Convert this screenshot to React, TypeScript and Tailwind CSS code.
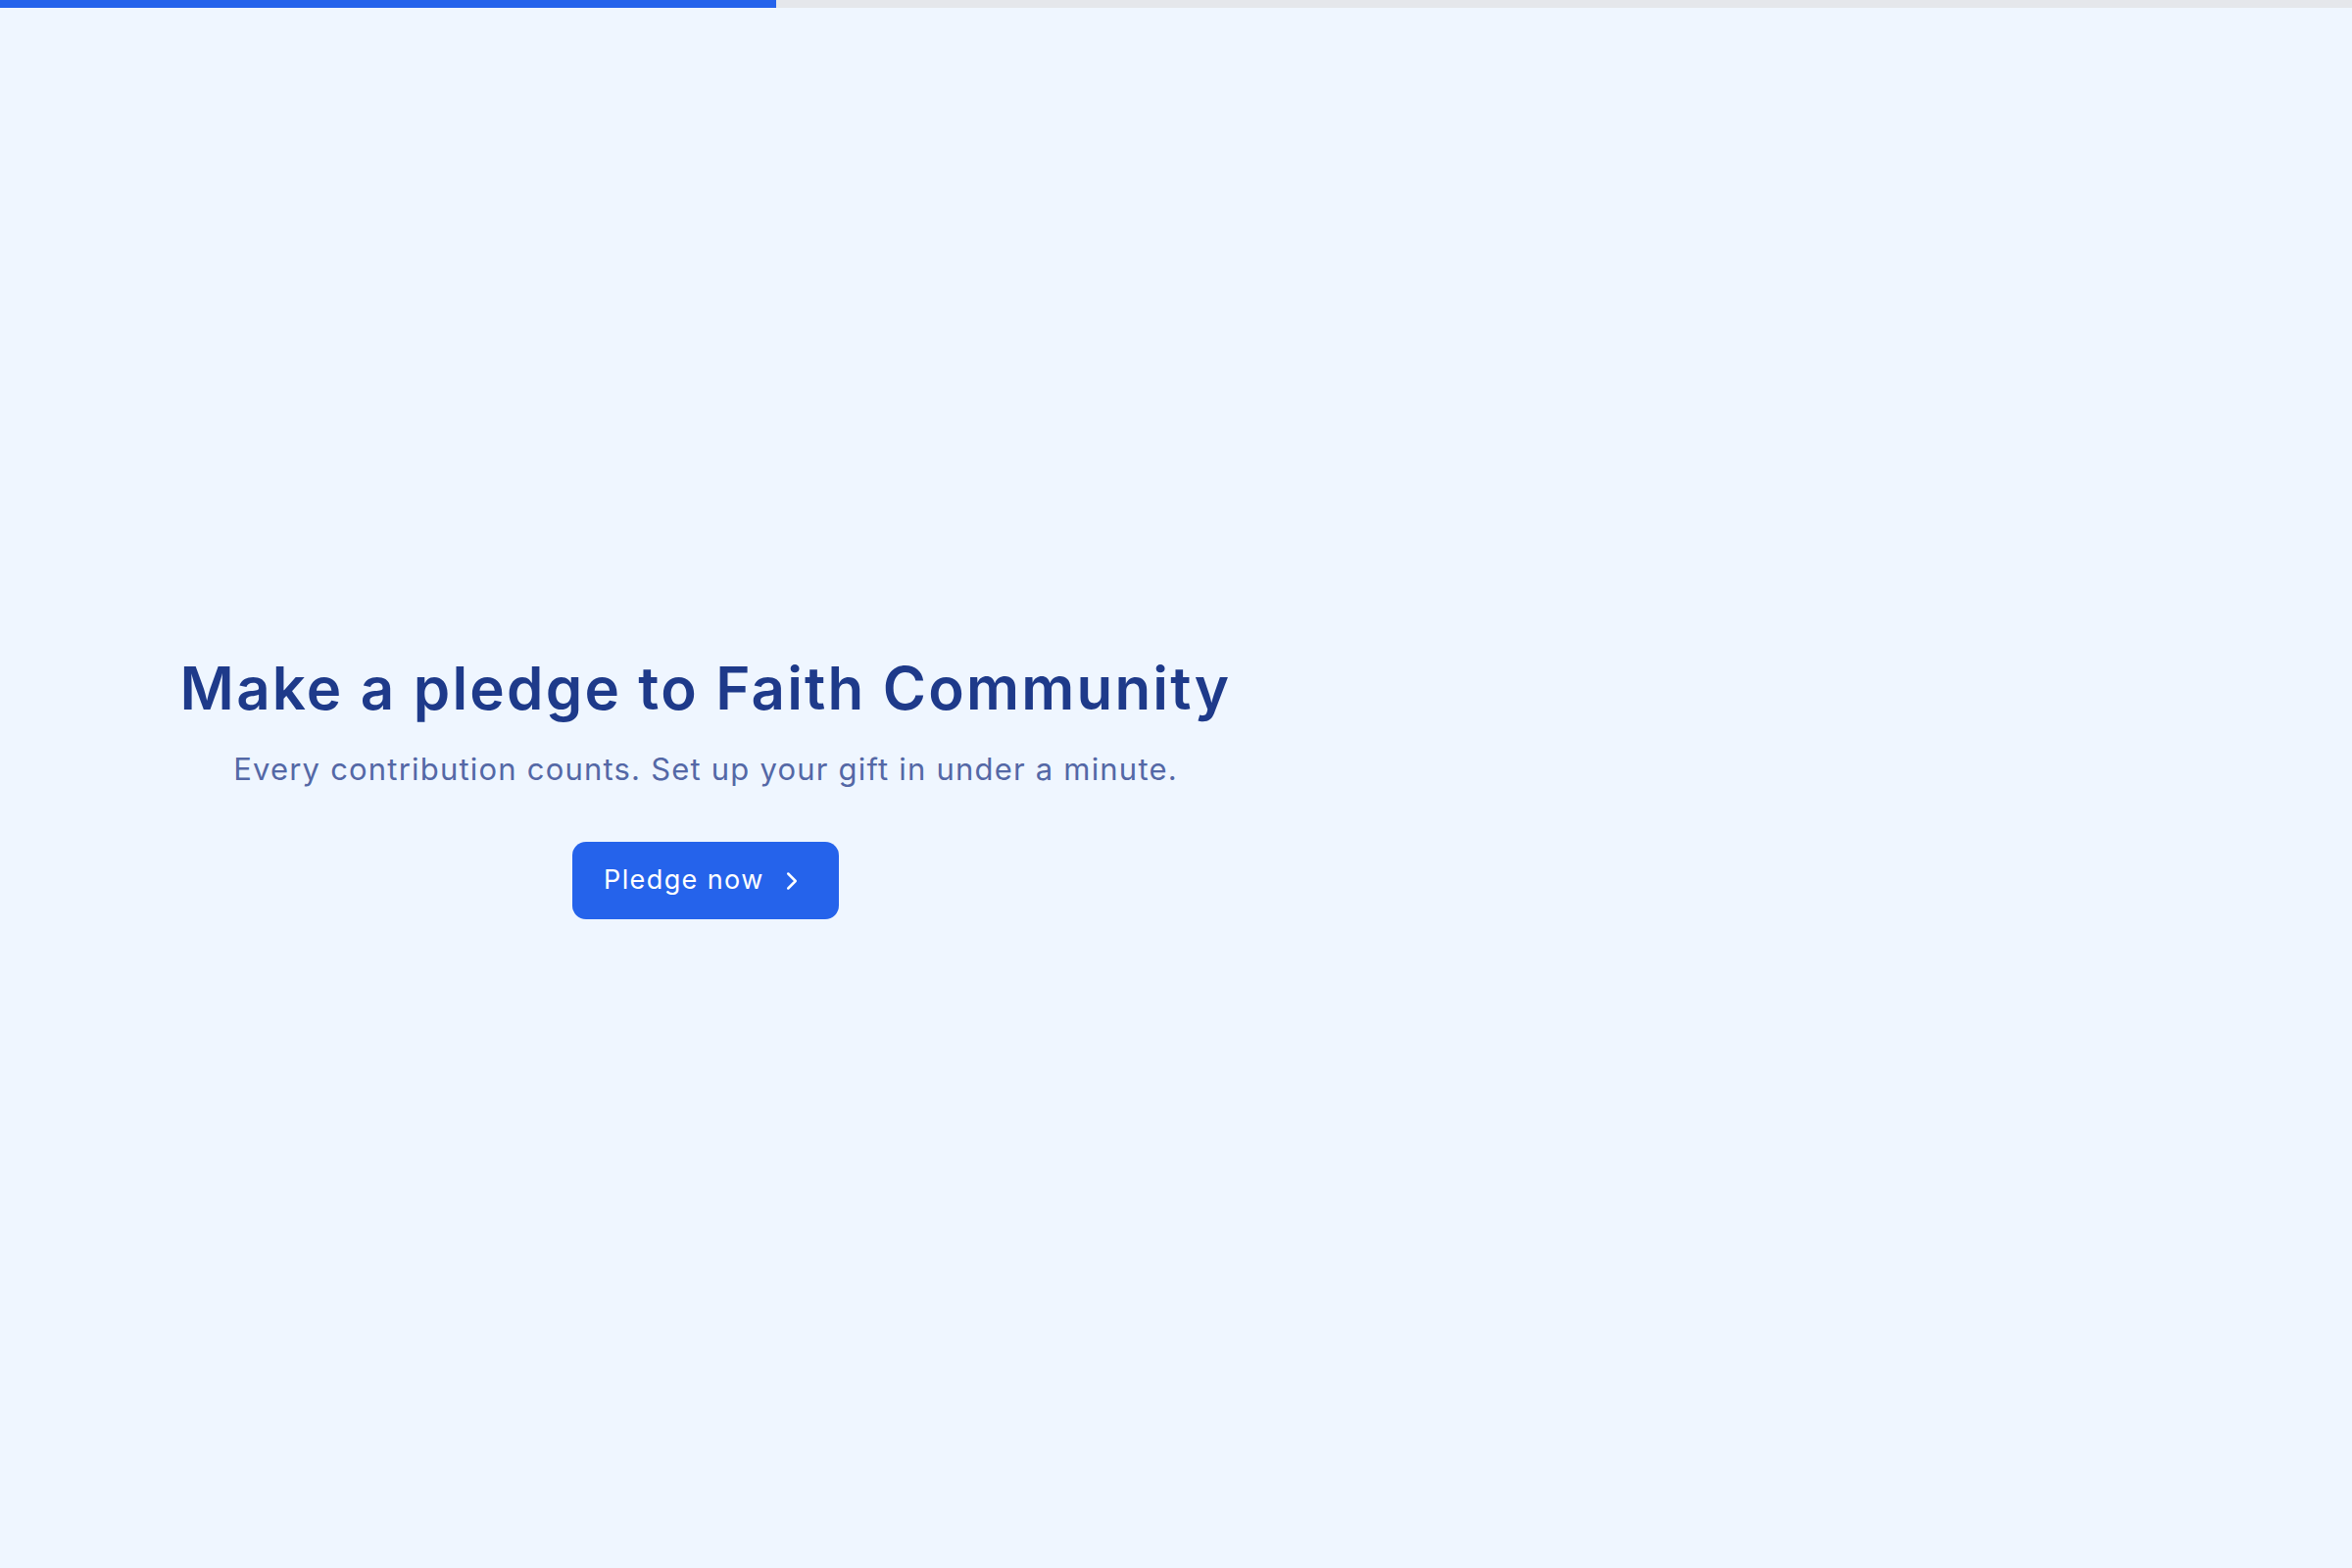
import { ChevronRight } from "lucide-react";

export default function App() {
  return (
    <div className="min-h-screen w-full bg-[#eff6ff]" style={{ fontFamily: "Inter, 'Noto Sans', sans-serif" }}>
      <div className="h-[8px] w-full bg-[#e5e7eb]">
        <div className="h-full w-[792px] bg-[#2563eb]" />
      </div>
      <main className="flex min-h-[1592px] w-full items-center">
        <section className="flex w-[1440px] flex-col items-center pt-[2px] text-center">
          <h1 className="text-[60px] leading-[60px] font-semibold tracking-[2.2px] text-[#1e3a8a]">
            Make a pledge to Faith Community
          </h1>
          <p className="mt-[35px] text-[31px] leading-[36px] tracking-[1.2px] text-[#5468a6]">
            Every contribution counts. Set up your gift in under a minute.
          </p>
          <button className="mt-[56px] flex h-[79px] w-[272px] items-center rounded-[14px] bg-[#2563eb] pl-[32px] text-[27px] tracking-[1.4px] text-white">
            <span>Pledge now</span>
            <ChevronRight size={30} strokeWidth={2} className="ml-[13px]" />
          </button>
        </section>
      </main>
    </div>
  );
}
